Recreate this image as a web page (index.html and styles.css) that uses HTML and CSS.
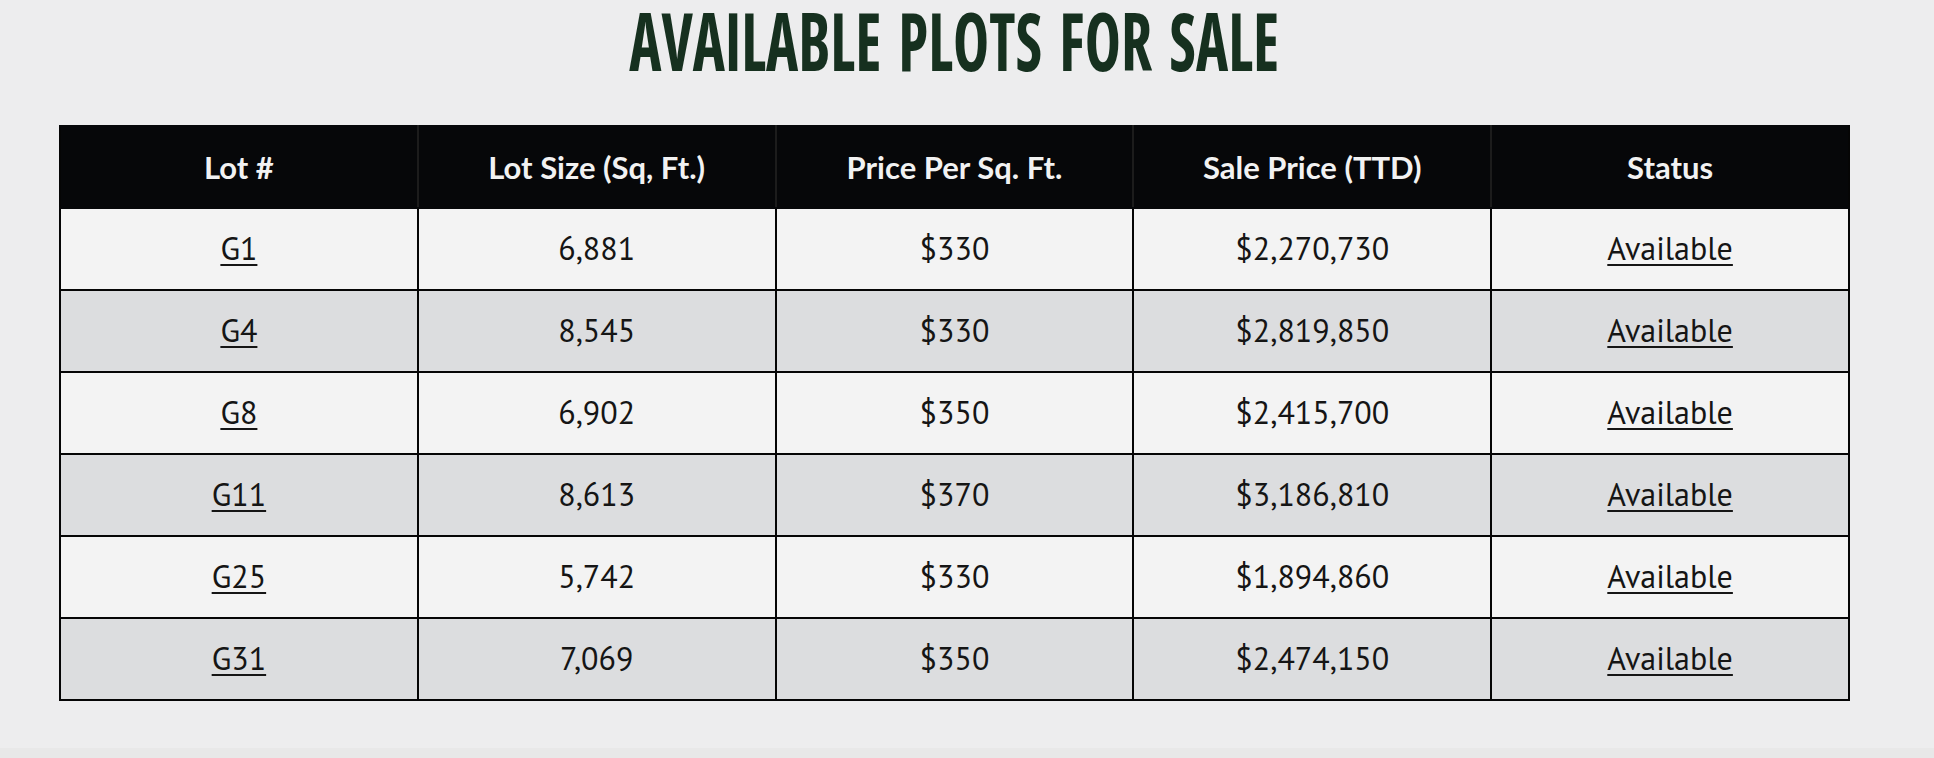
FILE: index.html
```html
<!DOCTYPE html>
<html lang="en">
<head>
<meta charset="utf-8">
<title>Available Plots For Sale</title>
<link rel="stylesheet" href="styles.css">
</head>
<body>
<main class="page">
  <section class="plots">
    <h1 class="plots-title"><span class="plots-title-text">AVAILABLE PLOTS FOR SALE</span></h1>
    <table class="plots-table">
      <thead>
        <tr>
          <th>Lot #</th>
          <th>Lot Size (Sq, Ft.)</th>
          <th>Price Per Sq. Ft.</th>
          <th>Sale Price (TTD)</th>
          <th>Status</th>
        </tr>
      </thead>
      <tbody>
        <tr>
          <td><a href="#">G1</a></td>
          <td>6,881</td>
          <td>$330</td>
          <td>$2,270,730</td>
          <td><a href="#">Available</a></td>
        </tr>
        <tr>
          <td><a href="#">G4</a></td>
          <td>8,545</td>
          <td>$330</td>
          <td>$2,819,850</td>
          <td><a href="#">Available</a></td>
        </tr>
        <tr>
          <td><a href="#">G8</a></td>
          <td>6,902</td>
          <td>$350</td>
          <td>$2,415,700</td>
          <td><a href="#">Available</a></td>
        </tr>
        <tr>
          <td><a href="#">G11</a></td>
          <td>8,613</td>
          <td>$370</td>
          <td>$3,186,810</td>
          <td><a href="#">Available</a></td>
        </tr>
        <tr>
          <td><a href="#">G25</a></td>
          <td>5,742</td>
          <td>$330</td>
          <td>$1,894,860</td>
          <td><a href="#">Available</a></td>
        </tr>
        <tr>
          <td><a href="#">G31</a></td>
          <td>7,069</td>
          <td>$350</td>
          <td>$2,474,150</td>
          <td><a href="#">Available</a></td>
        </tr>
      </tbody>
    </table>
  </section>
  <footer class="page-foot"></footer>
</main>
</body>
</html>
```
FILE: styles.css
```css
html, body {
  margin: 0;
  padding: 0;
}

body {
  background: #ededee;
  font-family: "PT Sans", "Open Sans", "Liberation Sans", sans-serif;
  color: #111;
}

.page {
  display: flex;
  flex-direction: column;
  min-height: 758px;
}

.plots {
  flex: 1;
  width: 1791px;
  margin-left: 59px;
}

.plots-title {
  margin: 0;
  text-align: center;
  font-family: "Open Sans", "Liberation Sans", sans-serif;
  font-weight: 700;
  font-stretch: 75%;
  font-size: 80px;
  line-height: 80px;
  color: #16301f;
  word-spacing: 8px;
}

.plots-title-text {
  display: inline-block;
  transform: scaleX(0.764);
  transform-origin: center;
  white-space: nowrap;
}

.plots-table {
  width: 100%;
  margin-top: 45px;
  border-collapse: collapse;
  table-layout: fixed;
  border: 2px solid #050505;
}

.plots-table th,
.plots-table td {
  height: 80px;
  padding: 0;
  text-align: center;
  vertical-align: middle;
  border: 2px solid #050505;
}

.plots-table th {
  background: #060709;
  color: #f2f2f2;
  font-family: Lato, "Open Sans", sans-serif;
  font-weight: 700;
  font-size: 31px;
  border-color: #060709 #1c1c1c;
}

.plots-table th:first-child {
  border-left-color: #050505;
}

.plots-table th:last-child {
  border-right-color: #050505;
}

.plots-table td {
  font-size: 32px;
  line-height: 36px;
  padding-bottom: 3px;
  height: 77px;
  color: #151515;
}

.plots-table tbody tr:nth-child(odd) td {
  background: #f3f3f3;
}

.plots-table tbody tr:nth-child(even) td {
  background: #dcdddf;
}

.plots-table a {
  color: #151515;
  text-decoration: underline;
  text-decoration-thickness: 2px;
  text-underline-offset: 4px;
}

.page-foot {
  height: 10px;
  background: #e8e8e8;
}
```
